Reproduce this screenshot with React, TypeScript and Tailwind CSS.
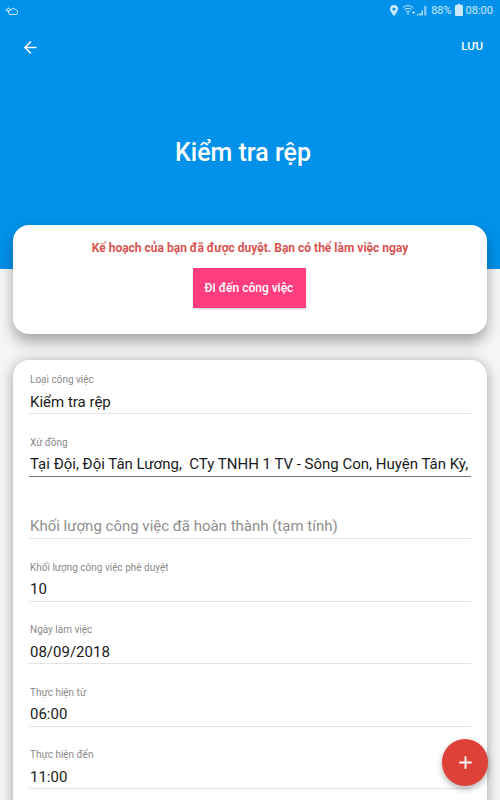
import { ArrowLeft, Plus } from "lucide-react";

const font = { fontFamily: "Roboto, sans-serif" };

function StatusBar() {
  return (
    <div className="flex h-[20px] items-center justify-between pl-[5px] pr-[7px] text-white/80">
      {/* weather notification */}
      <svg width="13" height="11" viewBox="0 0 13 11" fill="none" stroke="currentColor" strokeWidth="1">
        <circle cx="3.500" cy="5" r="1.500" />
        <path d="M3.500 1.500v.8M0.300 5h.8M1.300 2.800l.6.6M1.300 7.200l.6-.6M5.600 2.800l-.5.5" />
        <path d="M5 9.500h5.500a2.200 2.200 0 0 0 .3-4.400A2.800 2.800 0 0 0 5.800 5 2.300 2.300 0 0 0 5 9.500z" />
      </svg>
      <div className="flex items-center text-[11px] leading-none">
        {/* location */}
        <svg width="8" height="11" viewBox="0 0 8 11" className="mr-[4px]">
          <path fillRule="evenodd" fill="currentColor" d="M4 0a4 4 0 0 0-4 4c0 2.600 4 7 4 7s4-4.400 4-7a4 4 0 0 0-4-4zm0 2.400a1.600 1.600 0 1 1 0 3.200 1.600 1.600 0 0 1 0-3.200z" />
        </svg>
        {/* wifi */}
        <svg width="13" height="10" viewBox="0 0 13 10" fill="none" stroke="currentColor" strokeWidth="1" className="mr-px">
          <path d="M0.500 2.800C3.700 0 8.300 0 11.500 2.800M2.300 4.800c2.300-2 5.100-2 7.400 0M4 6.800c1.300-1.100 2.700-1.100 4 0" />
          <circle cx="6" cy="8.500" r="0.900" fill="currentColor" stroke="none" />
          <path d="M10 7.500h3M11.500 6v3" strokeWidth="0.800" />
        </svg>
        {/* signal */}
        <svg width="11" height="11" viewBox="0 0 11 11" fill="currentColor" className="mr-[4px]">
          <rect x="1" y="9" width="1.500" height="1.500" />
          <rect x="3.500" y="8" width="1.300" height="2.500" />
          <rect x="5.500" y="5.500" width="1.300" height="5" />
          <rect x="8" y="1" width="2.500" height="9.500" opacity="0.6" />
        </svg>
        <span className="mr-[3px]">88%</span>
        {/* battery */}
        <svg width="8" height="12" viewBox="0 0 8 12" fill="currentColor" className="mr-[3px]">
          <path d="M2.500 0h3v1H7a1 1 0 0 1 1 1v9a1 1 0 0 1-1 1H1a1 1 0 0 1-1-1V2a1 1 0 0 1 1-1h1.500z" />
        </svg>
        <span>08:00</span>
      </div>
    </div>
  );
}

function Field({ label, value, active, muted }: { label?: string; value: string; active?: boolean; muted?: boolean }) {
  return (
    <div className={`flex h-[41px] flex-col justify-end border-b ${active ? "border-[#757575]" : "border-[#e3e3e3]"}`}>
      {label && <div className="mb-[2.500px] h-[14px] pl-px text-[10px] leading-[14px] text-[#8a8a8a]">{label}</div>}
      <div className={`h-[24px] overflow-hidden whitespace-pre pl-px text-[15px] leading-[24px] ${muted ? "text-[#8f8f8f]" : "text-[#1a1a1a]"}`}>
        {value}
      </div>
    </div>
  );
}

export default function App() {
  return (
    <div className="relative h-[800px] w-[500px] overflow-hidden bg-[#f5f5f5]" style={font}>
      {/* Header */}
      <div className="h-[269px] bg-[#0091ea] text-white">
        <StatusBar />
        <div className="flex h-[54px] items-center justify-between pl-[21px] pr-[17px]">
          <ArrowLeft size={19} strokeWidth={2} />
          <span className="text-[11.500px] font-medium">LƯU</span>
        </div>
        <h1 className="pr-[14px] pt-[52px] text-center text-[25px] font-medium leading-[54px]">Kiểm tra rệp</h1>
      </div>

      {/* Approval card */}
      <div className="relative mx-[13px] -mt-[44px] flex h-[109px] flex-col items-center rounded-[16px] bg-white pt-[15px] shadow-[0_8px_14px_rgba(0,0,0,0.32)]">
        <p className="text-[12px] font-bold leading-[16px] text-[#d9534f]">Kế hoạch của bạn đã được duyệt. Bạn có thể làm việc ngay</p>
        <button className="mr-[2px] mt-[12px] h-[40px] w-[113px] bg-[#ff3d7f] text-[12px] font-medium text-white shadow-[0_1px_2px_rgba(0,0,0,0.2)]">
          Đi đến công việc
        </button>
      </div>

      {/* Form card */}
      <div className="mx-[13px] mt-[26px] flex h-[600px] flex-col gap-[21.500px] rounded-[16px] bg-white px-[16px] pt-[13px] shadow-[0_2px_13px_rgba(0,0,0,0.35)]">
        <Field label="Loại công việc" value="Kiểm tra rệp" />
        <Field label="Xứ đồng" value="Tại Đội, Đội Tân Lương,  CTy TNHH 1 TV - Sông Con, Huyện Tân Kỳ, Nghệ An" active />
        <Field value="Khối lượng công việc đã hoàn thành (tạm tính)" muted />
        <Field label="Khối lượng công việc phê duyệt" value="10" />
        <Field label="Ngày làm việc" value="08/09/2018" />
        <Field label="Thực hiện từ" value="06:00" />
        <Field label="Thực hiện đến" value="11:00" />
      </div>

      {/* FAB */}
      <button className="absolute left-[442px] top-[739px] flex h-[47px] w-[46px] items-center justify-center rounded-full bg-[#dd4137] text-white shadow-[0_3px_6px_rgba(0,0,0,0.3)]">
        <Plus size={19} strokeWidth={2.300} />
      </button>
    </div>
  );
}
